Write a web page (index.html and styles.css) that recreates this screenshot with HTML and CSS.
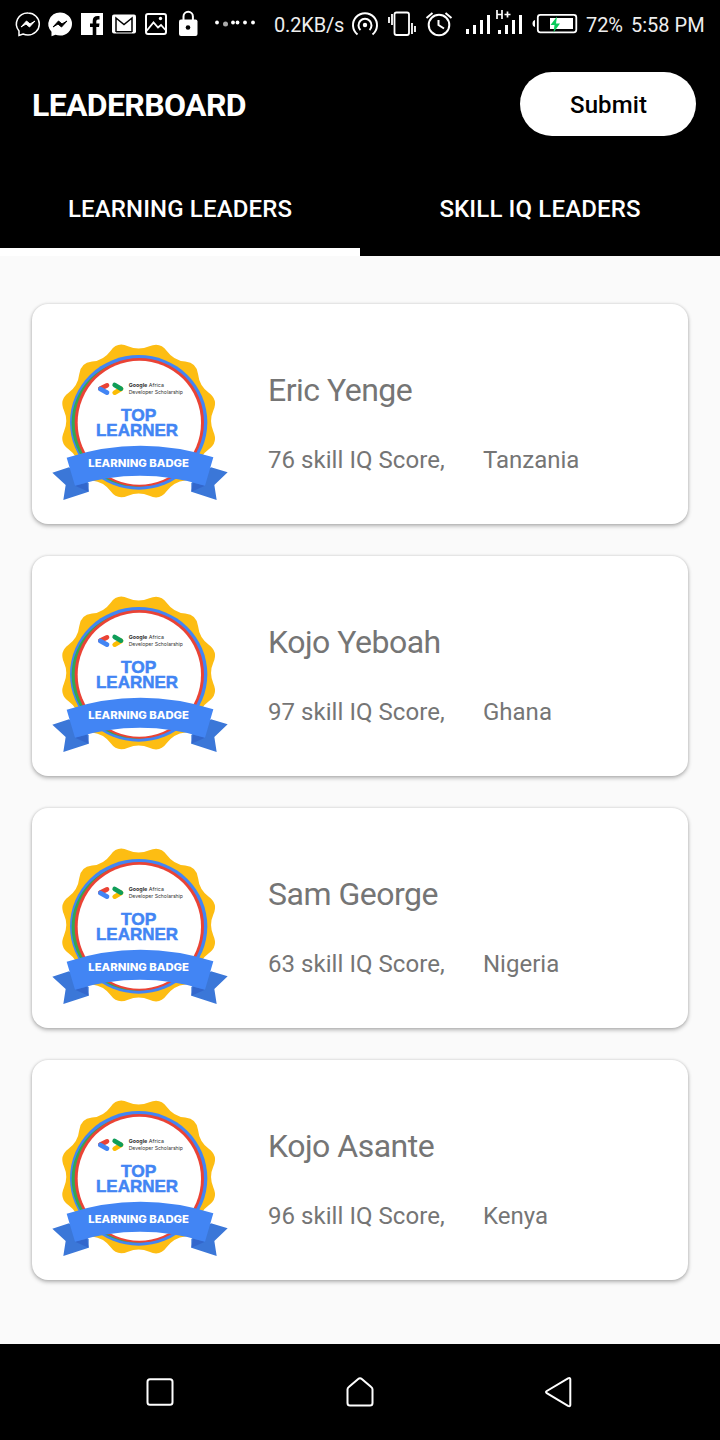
FILE: index.html
```html
<!DOCTYPE html>
<html lang="en">
<head>
<meta charset="utf-8">
<title>Leaderboard</title>
<link rel="stylesheet" href="styles.css">
</head>
<body>
<svg class="defs" width="0" height="0" aria-hidden="true">
  <defs>
    <g id="badge">
      <g transform="translate(296 258)">
        <path fill="#fdbd13" d="M-32-224.3Q0-210 32-224.3T84.5-210.3T139.900-178.300T178.300-139.900T210.300-84.500T224.300-32Q210 0 224.300 32T210.300 84.500T178.300 139.900T139.900 178.300T84.500 210.300T32 224.300Q0 210-32 224.300T-84.500 210.300T-139.900 178.300T-178.300 139.900T-210.300 84.500T-224.300 32Q-210 0-224.300-32T-210.300-84.500T-178.300-139.900T-139.900-178.300T-84.500-210.300T-32-224.300Z"/>
      </g>
      <ellipse cx="296" cy="262" rx="206" ry="202" fill="#4285f4"/>
      <ellipse cx="291" cy="264" rx="196" ry="191" fill="#34a853"/>
      <ellipse cx="298" cy="262" rx="194" ry="193" fill="#ea4335"/>
      <ellipse cx="298" cy="263" rx="185" ry="186" fill="#fff"/>
      <path fill="#3b77d8" d="M37 413L87 397L146 444L146 470L70 495L77 450ZM563 412L513 397L454 444L454 470L530 495L523 450Z"/>
      <path fill="#3367cc" d="M105 452L141 443L146 470ZM495 452L459 443L454 470Z"/>
      <path fill="#4285f4" d="M80 368Q300 297 520 367L495 452Q300 393 105 452Z"/>
      <g fill="none" stroke-width="14">
        <path stroke="#ea4335" stroke-linecap="round" d="M181 161L201 151"/>
        <path stroke="#4285f4" stroke-linecap="round" d="M181 162L201 173"/>
        <path stroke="#fbbc04" stroke-linecap="round" d="M224 173L243 162"/>
        <path stroke="#0f9d58" stroke-linecap="round" d="M224 150L243 161"/>
      </g>
    </g>
  </defs>
</svg>

<header class="header">
  <div class="status">
    <svg class="slot" viewBox="0 0 32 48"><path d="M16 13a11.3 11 0 0 1 0 22q-2.500 0-5-1l-4 1.500v-4.500A11.300 11 0 0 1 16 13z" fill="none" stroke="#fff" stroke-width="1.500"/><path d="M9 27l5.500-6 3.500 3 5-3-5.500 6-3.500-3z" fill="#fff" stroke="#fff"/></svg>
    <svg class="slot" viewBox="0 0 32 48"><path d="M16 12.500a12 11.500 0 0 1 0 23q-2.500 0-4.500-.8l-4 1.500v-4.500A12 11.500 0 0 1 16 12.500z" fill="#fff"/><path d="M9 27l5.500-6 3.500 3 5-3-5.500 6-3.500-3z" stroke="#000"/></svg>
    <svg class="slot" viewBox="0 0 32 48"><path fill="#fff" d="M5 13h22v22H5z"/><path d="M16.700 35v-8H14v-3.500h2.700V21q0-5 5-5h1.800v3.400H22q-1.700 0-1.700 1.800v2.300h3.200L23 27h-2.700v8z"/></svg>
    <svg class="slot" viewBox="0 0 32 48"><rect x="4" y="14.500" width="24" height="19" rx="2" fill="#fff"/><path fill="none" stroke="#000" stroke-width="1.500" d="M8 32V18l8 6.500 8-6.500v14M8 31.700h16"/></svg>
    <svg class="slot" viewBox="0 0 32 48"><rect x="6" y="14" width="20" height="20" rx="2" fill="none" stroke="#fff" stroke-width="2"/><path d="M6.500 31l7-8.500 4.500 5 3-2.500 4.500 5" fill="none" stroke="#fff" stroke-width="1.800"/><circle cx="20.500" cy="18.500" r="1.700" fill="#fff"/></svg>
    <svg class="slot" viewBox="0 0 32 48"><path d="M11.500 21v-4.500a4.700 4.700 0 0 1 9.400 0V21" fill="none" stroke="#fff" stroke-width="2"/><rect x="7" y="19.500" width="18.500" height="16.500" rx="2" fill="#fff"/><circle cx="16" cy="27.500" r="2.300"/></svg>
    <svg class="dots" viewBox="0 0 70 48" fill="#fff"><circle cx="13" cy="22.500" r="1.900"/><circle cx="21.500" cy="24" r="2.500" fill="#aaa"/><circle cx="29" cy="22.500" r="1.900"/><circle cx="33.500" cy="22.500" r="1.900"/><circle cx="41" cy="22.500" r="1.900"/><circle cx="49" cy="22.500" r="1.900"/></svg>
    <span class="speed">0.2KB/s</span>
    <svg class="cast" viewBox="0 0 40 48" fill="none" stroke="#fff" stroke-width="2"><path d="M13.500 34.500a12 12 0 1 1 15 0"/><path d="M16.500 30a6.500 6.500 0 1 1 9 0"/><circle cx="21" cy="25" r="2.200" fill="#fff" stroke="none"/></svg>
    <svg class="vibrate" viewBox="0 0 36 48" fill="none" stroke="#fff" stroke-width="1.800"><rect x="10.500" y="12.500" width="14.500" height="22.500" rx="2"/><path d="M5 17v6M8 14v11M28 23v11M31 26v6"/></svg>
    <svg class="alarm" viewBox="0 0 38 48" fill="none" stroke="#fff" stroke-width="2"><circle cx="19" cy="25" r="10.300"/><path d="M6.500 18l6-5M31.500 18l-6-5M18.500 20v5l5.500 3.500"/></svg>
    <svg class="signal" viewBox="0 0 72 48"><path d="M9.500 34v-5M16.500 34v-9M23.500 34V20M30.500 34V15M41.500 34v-4M48.500 34v-9M55.500 34V20M62.500 34V15" stroke="#fff" stroke-width="3"/><path d="M39 10v9M44 10v9M39 14.500h5M46.500 14.500h6M49.500 11.500v6" stroke="#fff" stroke-width="1.700"/></svg>
    <svg class="battery" viewBox="0 0 56 48"><rect x="7.800" y="14.800" width="38.500" height="17.500" rx="2.500" fill="none" stroke="#fff" stroke-width="1.800"/><path d="M5 20v7q-2.500-.5-2.500-3.500T5 20z" fill="#fff"/><path d="M20 18h23v11H20z" fill="#fff"/><path d="M27 16.500L20.500 25h4l-1 7.500 6.500-9h-4z" fill="#0ccb5b"/></svg>
    <span class="percent">72%</span>
    <span class="clock">5:58 PM</span>
  </div>
  <div class="appbar">
    <h1 class="title">LEADERBOARD</h1>
    <button class="submit">Submit</button>
  </div>
  <nav class="tabs">
    <div class="tab active">LEARNING LEADERS</div>
    <div class="tab">SKILL IQ LEADERS</div>
  </nav>
</header>

<main class="list">
  <article class="card">
    <svg class="badge" viewBox="0 0 600 525"><use href="#badge"/><text class="org" x="266" y="157" textLength="106" lengthAdjust="spacingAndGlyphs"><tspan class="strong">Google</tspan> Africa</text><text class="org" x="266" y="177" textLength="163" lengthAdjust="spacingAndGlyphs">Developer Scholarship</text><text class="top"><tspan x="243" y="259" textLength="106" lengthAdjust="spacingAndGlyphs">TOP</tspan> <tspan x="168" y="304" textLength="246" lengthAdjust="spacingAndGlyphs">LEARNER</tspan></text><text class="ribbon" x="145" y="395" textLength="302" lengthAdjust="spacingAndGlyphs">LEARNING BADGE</text></svg>
    <div class="info"><h2 class="name">Eric Yenge</h2><div class="meta"><span class="score">76 skill IQ Score,</span><span>Tanzania</span></div></div>
  </article>
  <article class="card">
    <svg class="badge" viewBox="0 0 600 525"><use href="#badge"/><text class="org" x="266" y="157" textLength="106" lengthAdjust="spacingAndGlyphs"><tspan class="strong">Google</tspan> Africa</text><text class="org" x="266" y="177" textLength="163" lengthAdjust="spacingAndGlyphs">Developer Scholarship</text><text class="top"><tspan x="243" y="259" textLength="106" lengthAdjust="spacingAndGlyphs">TOP</tspan> <tspan x="168" y="304" textLength="246" lengthAdjust="spacingAndGlyphs">LEARNER</tspan></text><text class="ribbon" x="145" y="395" textLength="302" lengthAdjust="spacingAndGlyphs">LEARNING BADGE</text></svg>
    <div class="info"><h2 class="name">Kojo Yeboah</h2><div class="meta"><span class="score">97 skill IQ Score,</span><span>Ghana</span></div></div>
  </article>
  <article class="card">
    <svg class="badge" viewBox="0 0 600 525"><use href="#badge"/><text class="org" x="266" y="157" textLength="106" lengthAdjust="spacingAndGlyphs"><tspan class="strong">Google</tspan> Africa</text><text class="org" x="266" y="177" textLength="163" lengthAdjust="spacingAndGlyphs">Developer Scholarship</text><text class="top"><tspan x="243" y="259" textLength="106" lengthAdjust="spacingAndGlyphs">TOP</tspan> <tspan x="168" y="304" textLength="246" lengthAdjust="spacingAndGlyphs">LEARNER</tspan></text><text class="ribbon" x="145" y="395" textLength="302" lengthAdjust="spacingAndGlyphs">LEARNING BADGE</text></svg>
    <div class="info"><h2 class="name">Sam George</h2><div class="meta"><span class="score">63 skill IQ Score,</span><span>Nigeria</span></div></div>
  </article>
  <article class="card">
    <svg class="badge" viewBox="0 0 600 525"><use href="#badge"/><text class="org" x="266" y="157" textLength="106" lengthAdjust="spacingAndGlyphs"><tspan class="strong">Google</tspan> Africa</text><text class="org" x="266" y="177" textLength="163" lengthAdjust="spacingAndGlyphs">Developer Scholarship</text><text class="top"><tspan x="243" y="259" textLength="106" lengthAdjust="spacingAndGlyphs">TOP</tspan> <tspan x="168" y="304" textLength="246" lengthAdjust="spacingAndGlyphs">LEARNER</tspan></text><text class="ribbon" x="145" y="395" textLength="302" lengthAdjust="spacingAndGlyphs">LEARNING BADGE</text></svg>
    <div class="info"><h2 class="name">Kojo Asante</h2><div class="meta"><span class="score">96 skill IQ Score,</span><span>Kenya</span></div></div>
  </article>
</main>

<footer class="navbar">
  <svg viewBox="0 0 40 40"><rect x="7.500" y="7.300" width="25" height="25.400" rx="2.500"/></svg>
  <svg viewBox="0 0 40 40"><path d="M20 6.300q1 0 1.800.7l9.400 8q1.300 1 1.300 2.500v13.600q0 2.500-2.500 2.500H10q-2.500 0-2.500-2.500V17.500q0-1.500 1.300-2.500l9.400-8q.8-.7 1.800-.7z"/></svg>
  <svg viewBox="0 0 40 40"><path d="M6.800 19Q5.200 20 6.800 21.200L28 33.900q2.300 1 2.300-1V7.300q0-2-2.300-1z"/></svg>
</footer>
</body>
</html>
```

FILE: styles.css
```css
* { box-sizing: border-box; }

body {
  margin: 0;
  width: 720px;
  height: 1440px;
  display: flex;
  flex-direction: column;
  background: #fafafa;
  font-family: Roboto, "Liberation Sans", sans-serif;
  overflow: hidden;
}

svg { display: block; flex: none; }
.defs { position: absolute; }

.header {
  height: 256px;
  background: #000;
  color: #fff;
}

.status {
  display: flex;
  height: 48px;
  padding-left: 12px;
  font-size: 20px;
  line-height: 51px;
  white-space: nowrap;
  color: #eee;
}
.status svg { height: 48px; }
.slot { width: 32px; }
.dots { width: 70px; }
.speed { width: 70px; letter-spacing: -.15px; }
.cast { width: 40px; }
.vibrate { width: 36px; }
.alarm { width: 38px; }
.signal { width: 72px; }
.battery { width: 56px; }
.percent { width: 45px; letter-spacing: -.1px; }

.appbar {
  display: flex;
  align-items: center;
  justify-content: space-between;
  height: 112px;
  padding: 0 24px 0 32px;
}
.title {
  margin: 2px 0 0;
  font-size: 32px;
  font-weight: 700;
  line-height: 38px;
  letter-spacing: -.65px;
}
.submit {
  width: 176px;
  height: 64px;
  padding: 2px 0 0 1px;
  border: 0;
  border-radius: 32px;
  background: #fff;
  color: #000;
  font: 500 24px/28px Roboto, sans-serif;
  letter-spacing: .1px;
}

.tabs { display: flex; height: 96px; }
.tab {
  flex: 1;
  text-align: center;
  font-size: 24px;
  font-weight: 500;
  line-height: 98px;
  letter-spacing: .14px;
}
.active { box-shadow: inset 0 -8px #fff; }

.list {
  flex: 1;
  display: flex;
  flex-direction: column;
  gap: 32px;
  padding: 48px 32px 0;
}
.card {
  display: flex;
  height: 220px;
  padding-left: 8px;
  border-radius: 16px;
  background: #fff;
  box-shadow: 0 2px 4px rgba(0, 0, 0, .28), 0 0 3px rgba(0, 0, 0, .14);
}
.badge { width: 200px; height: 175px; margin-top: 31px; }
.badge text { font-family: Inter, sans-serif; }
.badge .org { font-size: 16px; fill: #333; }
.badge .strong { font-weight: 700; }
.badge .top {
  font-family: "Liberation Sans", sans-serif;
  font-size: 50px;
  font-weight: 700;
  fill: #4285f4;
  stroke: #4285f4;
  stroke-width: 1.5px;
}
.badge .ribbon {
  font-size: 30px;
  font-weight: 800;
  fill: #fff;
}

.info { padding: 67px 0 0 28px; color: #757575; }
.name {
  margin: 0;
  font-size: 32px;
  font-weight: 400;
  line-height: 38px;
  letter-spacing: -.5px;
}
.meta {
  display: flex;
  margin-top: 37px;
  font-size: 24px;
  line-height: 28px;
}
.score { width: 215px; letter-spacing: .05px; }

.navbar {
  display: flex;
  justify-content: space-between;
  align-items: center;
  height: 96px;
  padding: 0 140px;
  background: #000;
}
.navbar svg {
  width: 40px;
  height: 40px;
  fill: none;
  stroke: #fff;
  stroke-width: 2;
}
```
